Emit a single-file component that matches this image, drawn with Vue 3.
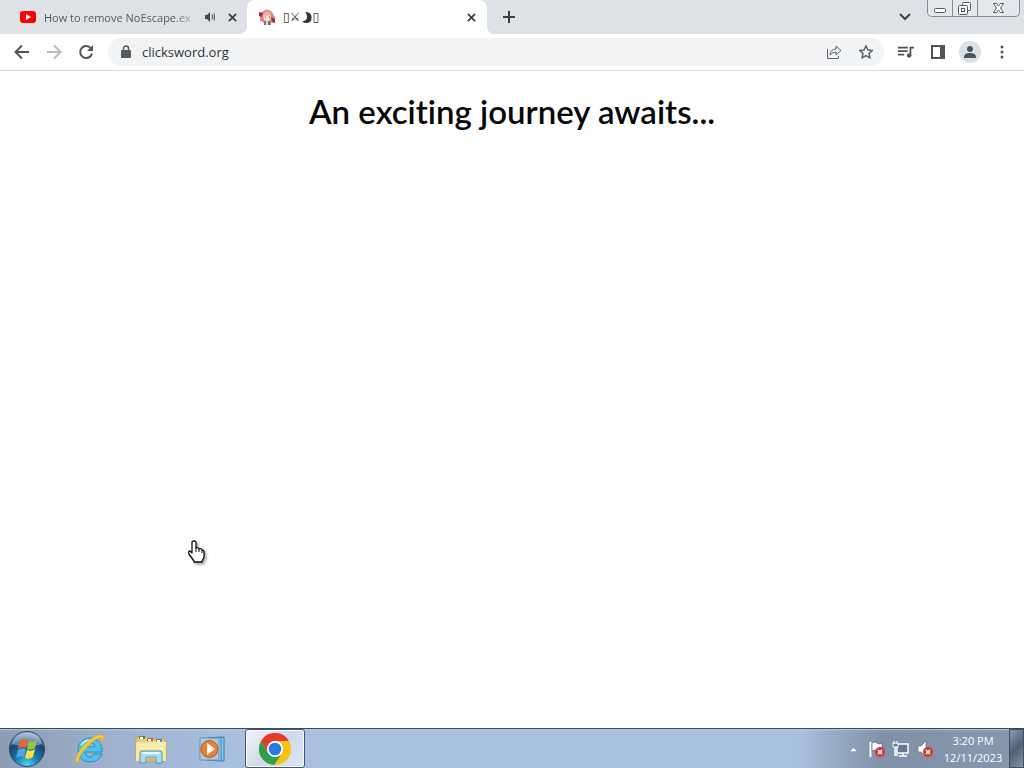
<script setup>
import { ref } from 'vue'
const address = ref('clicksword.org')
</script>

<template>
  <div class="desktop">
    <header class="tabstrip">
      <div class="tab quiet">
        <svg class="fav" viewBox="0 0 16 16"><rect y="2" width="16" height="12" rx="3" fill="#f00" /><path d="M6 5l5 3-5 3z" fill="#fff" /></svg>
        <span class="tab-title fade">How to remove NoEscape.ex</span>
        <svg class="sound" viewBox="0 0 12 12"><path d="M1 4h2l3-3v10L3 8H1z" fill="#45494d" /><path d="M8 3.500q1 2.500 0 5M10 2.500q1 3.500 0 7" fill="none" stroke="#45494d" /></svg>
        <button class="close" aria-label="Close tab"><svg viewBox="0 0 10 10"><path d="M1 1l8 8M9 1L1 9" /></svg></button>
      </div>
      <div class="tab active">
        <svg class="fav" viewBox="0 0 16 16">
          <path d="M3 3Q8-2 13 3l3 5v6l-3-1-2 3H6l-2-3-3-1V5z" fill="#d98f83" />
          <path d="M0 3l4 1-1 4-3-1zM12 8l4 2v4l-3-1z" fill="#a52f38" />
          <path d="M5 6l6-1 1 4-3 4-4-2z" fill="#f9ded2" />
          <path d="M4 5l3-3 5 2-3 3-3-1-2 4z" fill="#eeb0a0" />
          <path d="M6 8h1M10 8h1" stroke="#6c3d42" /><path d="M5 12l3 1 3-1 1 4H5z" fill="#74747e" /><path d="M7 13h2v3H7z" fill="#ddd" />
        </svg>
        <span class="tab-title symbols">▯⚔<svg class="moon" viewBox="0 0 10 12"><path d="M3 0q7 0 7 6 0 6-6 6-3 0-4-2 5 0 5-5 0-3-2-5z" fill="#33373b" /></svg>▯</span>
        <button class="close" aria-label="Close tab"><svg viewBox="0 0 10 10"><path d="M1 1l8 8M9 1L1 9" /></svg></button>
      </div>
      <button class="new" aria-label="New tab"><svg viewBox="0 0 12 12"><path d="M6 0v12M0 6h12" /></svg></button>
      <button class="search" aria-label="Search tabs"><svg viewBox="0 0 12 8"><path d="M1 1l5 5 5-5" /></svg></button>
      <div class="caption">
        <button aria-label="Minimize"><svg viewBox="0 0 24 16"><rect x="6.500" y="8.500" width="11" height="4" rx="1" fill="#fff" stroke="#555a62" /></svg></button>
        <button aria-label="Restore"><svg viewBox="0 0 24 16"><g fill="#f5f6f8" stroke="#555a62"><rect x="9.500" y="2.500" width="8" height="8" rx="1" /><rect x="5.500" y="5.500" width="9" height="9" rx="1" /><rect x="8.500" y="8.500" width="3" height="3" /></g></svg></button>
        <button class="wide" aria-label="Close"><svg viewBox="0 0 40 16"><path d="M14.500 3.500h3l2 2.500 2-2.500h3L21.500 8l3 4.500h-3l-2-2.500-2 2.500h-3l3-4.500z" fill="#fff" stroke="#555a62" /></svg></button>
      </div>
    </header>

    <nav class="toolbar">
      <button aria-label="Back"><svg viewBox="0 0 16 16"><path class="line" d="M15 8H2M8 1.500L1.500 8 8 14.500" /></svg></button>
      <button class="dim" aria-label="Forward"><svg viewBox="0 0 16 16"><path class="line" d="M1 8h13M8 1.500L14.500 8 8 14.500" /></svg></button>
      <button aria-label="Reload"><svg viewBox="0 0 16 16"><path class="line" d="M13 4.500A6 6 0 1 0 14 9.500" /><path d="M15 1v6H9z" fill="#505459" /></svg></button>
      <div class="omnibox">
        <svg class="lock" viewBox="0 0 10 14"><rect y="5" width="10" height="8" rx="1" fill="#55595e" /><path d="M2.500 6V3.500a2.500 2.500 0 0 1 5 0V6" fill="none" stroke="#55595e" stroke-width="1.500" /></svg>
        <input v-model="address" type="text" aria-label="Address">
        <button aria-label="Share"><svg viewBox="0 0 16 16"><path class="thin" d="M1.500 5v9.500h11V12M4 11q.500-6 6-6V2l5 4.500-5 4.500V8q-3.500 0-6 3z" /></svg></button>
        <button aria-label="Bookmark"><svg viewBox="0 0 16 16"><path class="thin bold" d="M8 1.800l1.900 4.100 4.500.5L11 9.400l1 4.500-4-2.300-4 2.300 1-4.500L1.600 6.400l4.500-.5z" /></svg></button>
      </div>
      <button aria-label="Media"><svg viewBox="0 0 18 16"><path class="line" d="M0 3h11M0 7h11M0 11h7M18 3h-4v9" /><circle cx="12.500" cy="12" r="2.500" fill="#505459" /></svg></button>
      <button aria-label="Side panel"><svg viewBox="0 0 16 16"><path class="line" d="M2 2h12v12H2z" /><path d="M10 2h4v12h-4z" fill="#505459" /></svg></button>
      <button aria-label="Profile"><svg class="avatar" viewBox="0 0 22 22"><circle cx="11" cy="11" r="11" fill="#dce1e6" /><circle cx="11" cy="8" r="3" fill="#455560" /><path d="M5 16q0-4 6-4t6 4v1H5z" fill="#455560" /></svg></button>
      <button aria-label="Menu"><svg viewBox="0 0 16 16"><g fill="#505459"><circle cx="8" cy="3" r="1.500" /><circle cx="8" cy="8" r="1.500" /><circle cx="8" cy="13" r="1.500" /></g></svg></button>
    </nav>

    <main>
      <h1>An exciting journey awaits...</h1>
    </main>

    <footer class="taskbar">
      <button class="start" aria-label="Start">
        <svg viewBox="0 0 38 38">
          <defs>
            <radialGradient id="orb" cx=".5" cy=".95" r=".9"><stop offset="0" stop-color="#45d5ef" /><stop offset=".4" stop-color="#1976a9" /><stop offset=".75" stop-color="#1b4470" /><stop offset="1" stop-color="#9bb5ca" /></radialGradient>
          </defs>
          <circle cx="19" cy="19" r="17.500" fill="url(#orb)" stroke="#274a6b" />
          <path d="M4 14Q7 4 19 3t15 11Q20 19 4 14z" fill="#c8dae7" opacity=".45" />
          <path d="M12 11q4-3 8-1l-2 8q-4-2-8 1z" fill="#ec6334" /><path d="M21 11q4 2 8-1l-2 8q-4 3-8 1z" fill="#93c83e" />
          <path d="M10 20q4-3 8-1l-2 8q-4-2-8 1z" fill="#4aa7e1" /><path d="M19 20q4 2 8-1l-2 8q-4 3-8 1z" fill="#ffdc4c" />
        </svg>
      </button>
      <button class="app" aria-label="Internet Explorer">
        <svg viewBox="0 0 32 32">
          <path d="M28 21c-2 5-6 8-12 8C9 29 4 24 4 17S9 5 16 5s12 5 12 12v2H11c0 3 2 5 5 5 2 0 3-1 4-3zM11 14h10c0-3-2-4-5-4s-5 1-5 4z" fill="#4fc2ec" stroke="#278fc4" />
          <path d="M7 12q4-5 10-5" fill="none" stroke="#b5eafa" stroke-width="2" />
          <path d="M5 29C-1 31 2 21 10 12S29-1 30 4q0 3-3 7 2-5 0-6-4-1-14 9T5 29z" fill="#f7cb34" stroke="#dba421" stroke-width=".6" />
        </svg>
      </button>
      <button class="app" aria-label="Windows Explorer">
        <svg viewBox="0 0 32 32">
          <path d="M1 4h10l2 2h16l2 3v19H1z" fill="#e9cf79" stroke="#bfa557" /><path d="M4 3h6v3H4z" fill="#3d9a4c" /><path d="M12 5h6v3h-6z" fill="#d65b40" /><path d="M21 6h6v3h-6z" fill="#4a8fd0" />
          <path d="M5 4h3v2H5zM13 6h3v2h-3zM22 7h3v2h-3z" fill="#fff" /><path d="M1 9h30v19H1z" fill="#f9e7a0" /><path d="M3 12h26M3 15h26" stroke="#fff5c8" />
          <path d="M5 30V20q0-2 2-2h18q2 0 2 2v10h-6v-6H11v6z" fill="#a9dcf3" stroke="#4898c2" /><path d="M7 20h18" stroke="#e6f8ff" stroke-width="2" /><path d="M12 25h8v3h-8z" fill="#d9b957" />
        </svg>
      </button>
      <button class="app" aria-label="Media Player">
        <svg viewBox="0 0 32 32">
          <path d="M14 5l14-1v24l-14-1z" fill="#8dc5ec" stroke="#307daf" /><path d="M10 5l15-1v24l-15-1z" fill="#b4dbf3" stroke="#307daf" /><path d="M4 5h19v22H4z" fill="#a9cce5" stroke="#6595b8" />
          <circle cx="13.500" cy="16" r="8.500" fill="#ee7f2d" stroke="#bd5720" /><path d="M11 10l8 6-8 6z" fill="#fff" />
        </svg>
      </button>
      <button class="app current" aria-label="Google Chrome">
        <svg viewBox="0 0 32 32">
          <circle cx="16" cy="16" r="16" fill="#fbc116" /><path d="M2.100 8A16 16 0 0 1 29.900 8H16L9 20z" fill="#e33b2e" /><path d="M2.100 8L9 20l7 4 6-2-7 10A16 16 0 0 1 2.100 8z" fill="#2da04e" />
          <circle cx="16" cy="16" r="8" fill="#fff" /><circle cx="16" cy="16" r="6.300" fill="#2878e4" />
        </svg>
      </button>
      <div class="tray">
        <button class="arrow" aria-label="Show hidden icons"><svg viewBox="0 0 8 5"><path d="M0 5l4-4 4 4z" fill="#f4f8fc" stroke="#596b82" stroke-width=".5" /></svg></button>
        <button aria-label="Action Center"><svg viewBox="0 0 18 18"><path d="M2.500 2v15" stroke="#fff" stroke-width="2" /><path d="M4 3q3-2 5 0t5 0v8q-3 2-5 0t-5 0z" fill="#fff" stroke="#465365" stroke-width=".6" /><circle cx="12" cy="12" r="5" fill="#d83833" /><path d="M10 10l4 4M14 10l-4 4" stroke="#fff" stroke-width="1.500" /></svg></button>
        <button aria-label="Network"><svg viewBox="0 0 18 18"><path d="M5 4h11v9H5z" fill="#627992" stroke="#fff" stroke-width="1.500" /><path d="M7 16h8M11 13v3M3 7v8h3" fill="none" stroke="#fff" stroke-width="1.500" /><path d="M1 3h5v4H1zM2 1v3M5 1v3" fill="#66788d" stroke="#fff" /></svg></button>
        <button aria-label="Volume muted"><svg viewBox="0 0 18 18"><path d="M2 6h3l5-5v16l-5-5H2z" fill="#fff" stroke="#526175" stroke-width=".6" /><circle cx="12" cy="12" r="5" fill="#d83833" /><path d="M10 10l4 4M14 10l-4 4" stroke="#fff" stroke-width="1.500" /></svg></button>
        <div class="clock"><span>3:20 PM</span><span>12/11/2023</span></div>
        <button class="peek" aria-label="Show desktop"></button>
      </div>
    </footer>

    <svg class="cursor" viewBox="0 0 20 24">
      <path d="M5 2q0-1 2-1t2 1v6q3-1 3 1 3-1 3 1 2 0 2 2v5l-2 4v1H7v-1l-5-7q-1-3 1-3l2 2z" fill="#fff" stroke="#111" stroke-width="1.300" stroke-linejoin="round" /><path d="M9 7v5M12 9v3M15 10v3" stroke="#111" />
    </svg>
  </div>
</template>

<style>
body { margin: 0; }
</style>

<style scoped>
.desktop { position: relative; display: flex; flex-direction: column; min-height: 100vh; background: #fff; font-family: "Open Sans", "Noto Sans", sans-serif; color: #303439; }
button { border: 0; padding: 0; margin: 0; background: none; display: flex; align-items: center; justify-content: center; flex: none; }
svg { display: block; flex: none; }
.tabstrip { display: flex; height: 34px; background: #dee1e6; }
.tab { display: flex; align-items: center; box-sizing: border-box; width: 240px; height: 34px; font-size: 12px; }
.quiet { width: 247px; padding: 0 10px 0 20px; color: #55595e; font-size: 11px; }
.active { position: relative; padding: 0 11px 0 12px; border-radius: 8px 8px 0 0; background: #fff; }
.active::before, .active::after { content: ""; position: absolute; bottom: 0; width: 8px; height: 8px; }
.active::before { right: 100%; background: radial-gradient(circle at 0 0, transparent 8px, #fff 8px); }
.active::after { left: 100%; background: radial-gradient(circle at 100% 0, transparent 8px, #fff 8px); }
.fav { width: 16px; height: 16px; margin-right: 8px; }
.tab-title { flex: 1; min-width: 0; white-space: nowrap; }
.fade { mask-image: linear-gradient(to right, #000 130px, transparent 154px); }
.symbols { display: flex; align-items: center; font-family: "DejaVu Sans", sans-serif; }
.moon { width: 10px; height: 11px; margin-left: 2px; }
.sound { width: 12px; height: 12px; margin: 0 11px 0 5px; }
.close { width: 10px; height: 18px; }
.close svg { width: 9px; height: 9px; }
.close path, .new path, .search path { fill: none; stroke: #3c4043; stroke-width: 2; }
.new { width: 28px; margin-left: 8px; }
.new svg { width: 12px; height: 12px; }
.search { width: 28px; margin-left: auto; margin-right: 8px; }
.search svg { width: 12px; height: 8px; }
.caption { display: flex; box-sizing: border-box; height: 17px; margin-right: 4px; border: 1px solid #858b94; border-top: 0; border-radius: 0 0 5px 5px; background: #e4e7eb; }
.caption button { width: 25px; border-right: 1px solid #858b94; }
.caption svg { width: 24px; height: 16px; }
.caption .wide { width: 41px; border: 0; }
.caption .wide svg { width: 40px; }
.toolbar { display: flex; align-items: center; box-sizing: border-box; height: 37px; padding: 0 6px; border-bottom: 1px solid #d9dbde; }
.toolbar button { width: 32px; height: 32px; }
.toolbar svg { width: 16px; height: 16px; }
.line { fill: none; stroke: #505459; stroke-width: 2; }
.dim .line { stroke: #b7b9bc; }
.thin { fill: none; stroke: #5f6368; stroke-width: 1; stroke-linejoin: round; }
.bold { stroke-width: 1.5px; }
.omnibox { display: flex; flex: 1; align-items: center; min-width: 0; height: 28px; margin: 0 6px; padding-left: 13px; padding-right: 2px; border-radius: 14px; background: #f1f3f4; }
.toolbar .lock { width: 10px; height: 14px; margin-right: 11px; }
.omnibox input { flex: 1; min-width: 0; height: 24px; padding: 0; border: 0; outline: 0; background: none; font: 13px "Open Sans", sans-serif; color: #303439; }
.toolbar .avatar { width: 22px; height: 22px; }
main { flex: 1; }
h1 { margin: 18px 0 0; text-align: center; font: 600 33px/44px Lato, sans-serif; font-variant-ligatures: none; color: #080808; }
.taskbar { display: flex; box-sizing: border-box; height: 40px; border-top: 1px solid #35476a; background: linear-gradient(to bottom, #bccbdf 0, transparent 2px), linear-gradient(to right, #8d9bb2, #9fb2cf 120px, #a9c0df 240px, #a9c0df 78%, #8191a8 86%, #8797ad); }
.start { width: 54px; }
.start svg { width: 38px; height: 38px; }
.app { width: 60px; margin-left: 1px; padding: 0 5px; }
.start + .app { margin-left: 6px; }
.app svg { width: 32px; height: 32px; }
.app.current { box-sizing: border-box; margin-left: 3px; border: 1px solid #48556b; border-radius: 3px; background: linear-gradient(135deg, #f2f5f9, #cedae9 50%, #dee6f0); box-shadow: inset 0 0 0 1px #f6f9fd; }
.tray { display: flex; align-items: center; margin-left: auto; }
.tray button { width: 24px; }
.tray svg { width: 18px; height: 18px; }
.tray .arrow svg { width: 9px; height: 6px; }
.clock { display: flex; flex-direction: column; width: 72px; text-align: center; color: #fff; font-size: 11px; line-height: 17px; }
.tray .peek { width: 15px; height: 39px; border: 1px solid #3f5068; background: linear-gradient(135deg, #8d9aac, #526073 50%, #8393aa); }
.cursor { position: absolute; left: 187px; top: 540px; width: 20px; height: 24px; filter: drop-shadow(2px 2px 1px #0005); }
</style>
